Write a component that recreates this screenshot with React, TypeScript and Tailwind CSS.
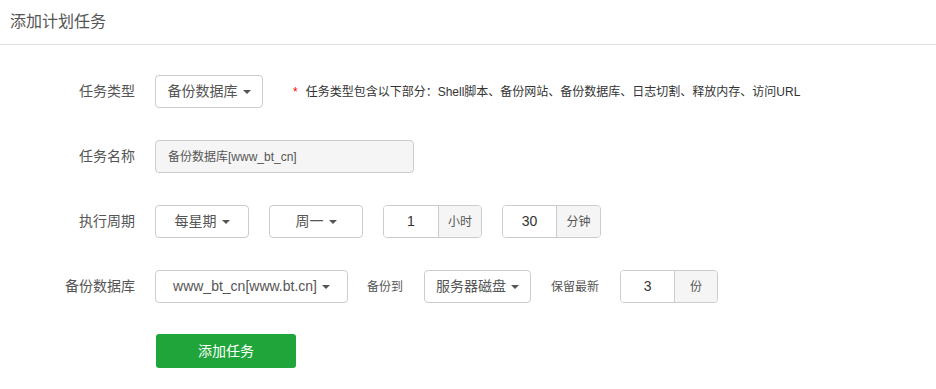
import React from "react";

const font = { fontFamily: '"Liberation Sans", "Noto Sans CJK SC", sans-serif' };

function Caret() {
  return (
    <span className="ml-[5px] inline-block h-0 w-0 border-x-[4px] border-t-[4px] border-x-transparent border-t-[#555]" />
  );
}

function Select({ text, w }: { text: string; w: string }) {
  return (
    <div
      className={`${w} flex h-[33px] items-center justify-center rounded-[4px] border border-[#ccc] bg-white text-[14px] text-[#555]`}
    >
      <span>{text}</span>
      <Caret />
    </div>
  );
}

function Group({ value, unit, iw, aw }: { value: string; unit: string; iw: string; aw: string }) {
  return (
    <div className="flex h-[33px] overflow-hidden rounded-[4px] border border-[#ccc]">
      <div className={`${iw} flex items-center justify-center bg-white text-[14px] text-[#333]`}>{value}</div>
      <div className={`${aw} flex items-center justify-center border-l border-[#ccc] bg-[#f5f5f5] text-[12px] text-[#555]`}>
        {unit}
      </div>
    </div>
  );
}

function Row({ label, children }: { label: string; children: React.ReactNode }) {
  return (
    <div className="flex h-[33px] items-center">
      <div className="w-[135px] text-right text-[14px] text-[#555]">{label}</div>
      <div className="ml-[20px] flex items-center">{children}</div>
    </div>
  );
}

export default function App() {
  return (
    <div className="h-[389px] w-[936px] bg-white" style={font}>
      <div className="flex h-[45px] items-center border-b border-[#ddd] pl-[10px] text-[16px] text-[#555]">
        添加计划任务
      </div>
      <div className="flex flex-col gap-[32px] pt-[30px]">
        <Row label="任务类型">
          <Select text="备份数据库" w="w-[108px]" />
          <span className="ml-[30px] text-[12px] text-[#f00]">*</span>
          <span className="ml-[8px] text-[12px] text-[#333]">
            任务类型包含以下部分：Shell脚本、备份网站、备份数据库、日志切割、释放内存、访问URL
          </span>
        </Row>
        <Row label="任务名称">
          <div className="flex h-[33px] w-[259px] items-center rounded-[4px] border border-[#ccc] bg-[#f5f5f5] pl-[12px] text-[12px] text-[#555]">
            备份数据库[www_bt_cn]
          </div>
        </Row>
        <Row label="执行周期">
          <Select text="每星期" w="w-[94px]" />
          <div className="ml-[20px]">
            <Select text="周一" w="w-[94px]" />
          </div>
          <div className="ml-[20px]">
            <Group value="1" unit="小时" iw="w-[54px]" aw="w-[43px]" />
          </div>
          <div className="ml-[20px]">
            <Group value="30" unit="分钟" iw="w-[53px]" aw="w-[44px]" />
          </div>
        </Row>
        <Row label="备份数据库">
          <Select text="www_bt_cn[www.bt.cn]" w="w-[193px]" />
          <span className="ml-[19px] text-[12px] text-[#555]">备份到</span>
          <div className="ml-[21px]">
            <Select text="服务器磁盘" w="w-[107px]" />
          </div>
          <span className="ml-[20px] text-[12px] text-[#555]">保留最新</span>
          <div className="ml-[21px]">
            <Group value="3" unit="份" iw="w-[53px]" aw="w-[43px]" />
          </div>
        </Row>
        <div className="flex">
          <button className="ml-[156px] -mt-[1px] flex h-[34px] w-[140px] items-center justify-center rounded-[3px] bg-[#20a53a] text-[14px] text-white">
            添加任务
          </button>
        </div>
      </div>
    </div>
  );
}
